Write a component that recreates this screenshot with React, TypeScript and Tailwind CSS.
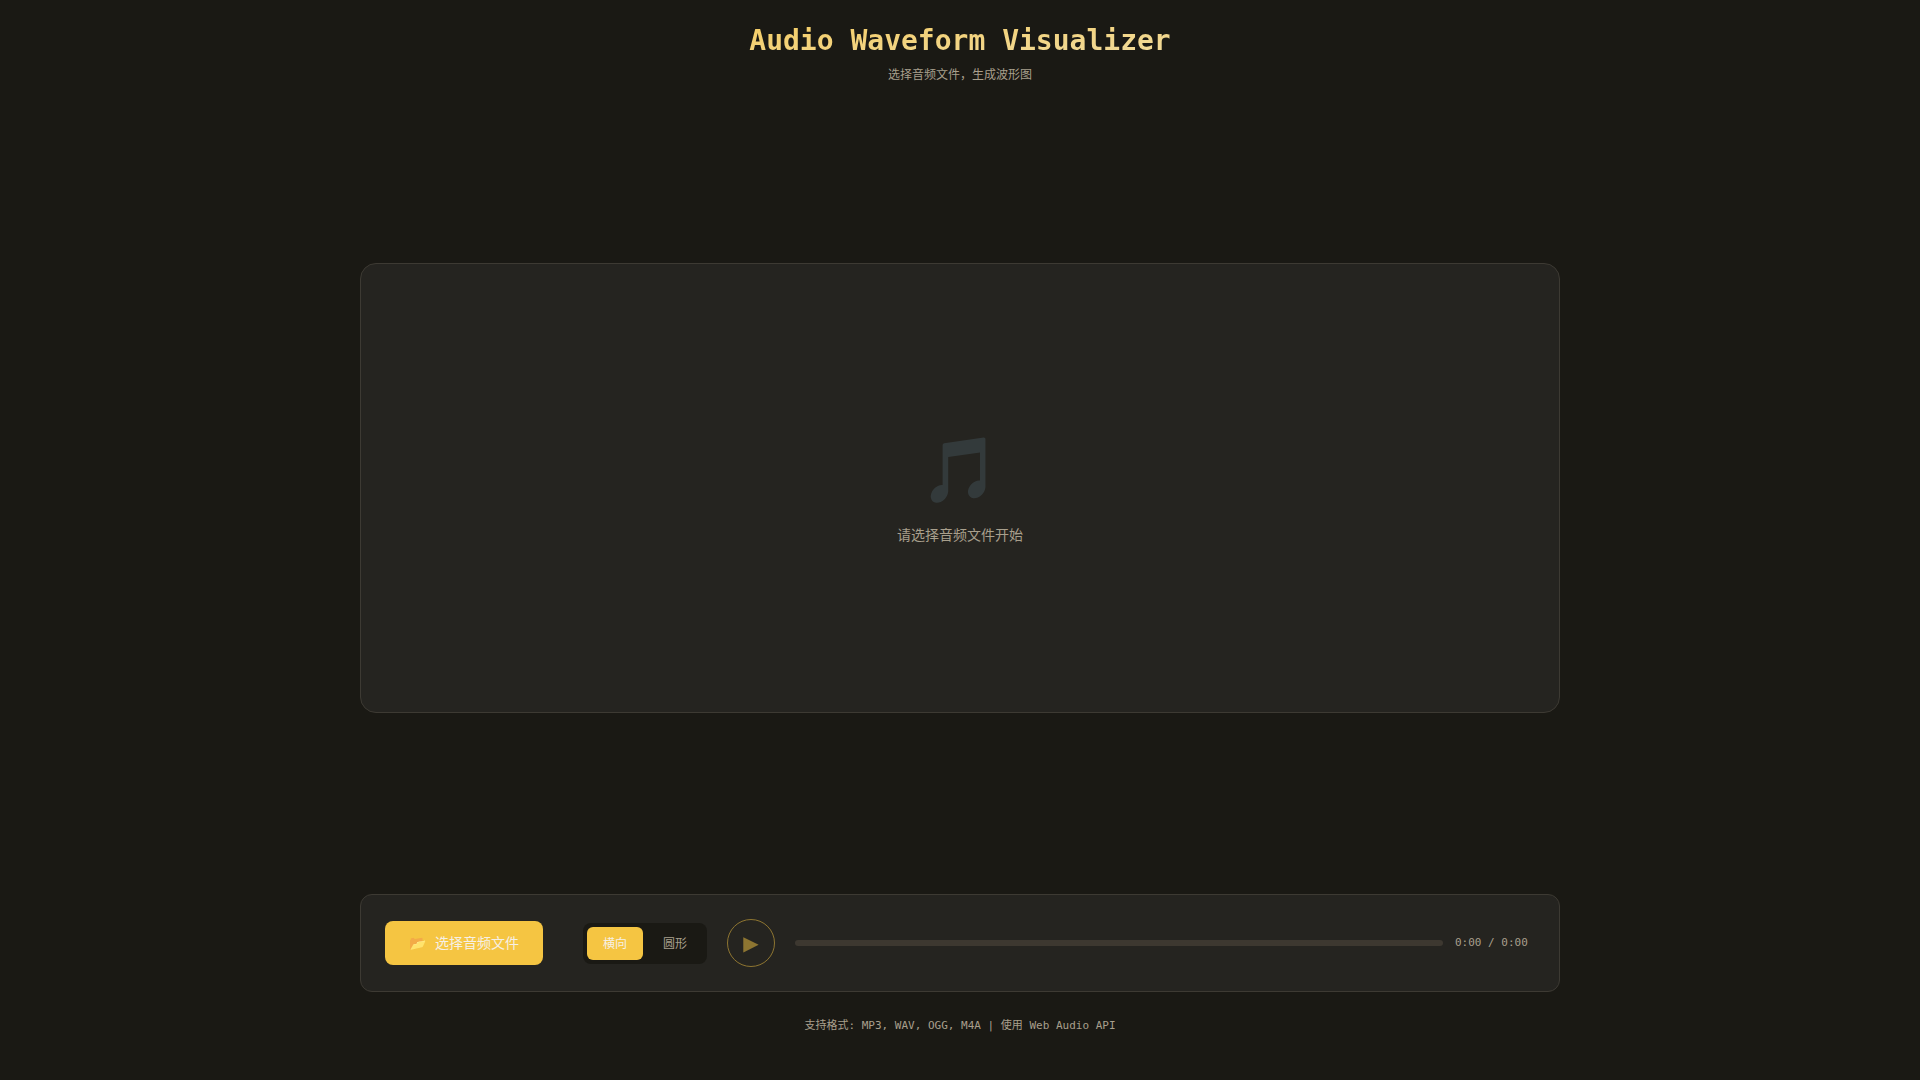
import React, { useState } from "react"

const modes = [
  { id: "linear", label: "横向" },
  { id: "circular", label: "圆形" },
]

export default function App() {
  const [mode, setMode] = useState("linear")

  return (
    <div className="flex min-h-screen flex-col items-center bg-[#1a1914] p-5 font-['DejaVu_Sans_Mono','Noto_Sans_CJK_SC',monospace] text-[#f5f0e6]">
      <header className="mb-[18px] text-center">
        <h1 className="bg-linear-to-br from-[#f5cc60] to-[#f0dca0] bg-clip-text text-[28px] leading-[42px] font-bold text-transparent">
          Audio Waveform Visualizer
        </h1>
        <p className="mt-1 text-xs leading-[18px] text-[#a89f8c]">选择音频文件，生成波形图</p>
      </header>

      <main className="flex w-full max-w-[1200px] flex-1 flex-col gap-5">
        <div className="flex flex-1 items-center">
          <section className="flex h-[450px] w-full flex-col items-center justify-center rounded-2xl border border-[#3d3a33] bg-[#252420]">
            <span className="text-[64px] leading-[78px] opacity-30">🎵</span>
            <p className="mt-4 text-sm leading-5 text-[#a89f8c]">请选择音频文件开始</p>
          </section>
        </div>

        <section className="flex items-center gap-5 rounded-xl border border-[#3d3a33] bg-[#252420] p-6">
          <button className="mr-5 flex items-center gap-[9px] rounded-lg bg-[#f5c542] px-6 py-3 text-sm leading-5">
            <span>📂</span>
            <span>选择音频文件</span>
          </button>
          <div className="flex gap-1 rounded-lg bg-[#1a1914] p-1">
            {modes.map((m) => (
              <button
                key={m.id}
                onClick={() => setMode(m.id)}
                className={`rounded-md px-4 pt-2 pb-1.5 text-xs leading-[19px] ${mode === m.id ? "bg-[#f5c542] text-[#f5f0e6]" : "text-[#a89f8c]"}`}
              >
                {m.label}
              </button>
            ))}
          </div>
          <button
            disabled
            aria-label="播放"
            className="flex size-12 items-center justify-center rounded-full border border-[#f5c542] font-['DejaVu_Sans',sans-serif] text-xl leading-8 text-[#f5c542] opacity-50"
          >
            ▶
          </button>
          <div className="flex flex-1 items-center gap-3">
            <div className="h-1.5 flex-1 rounded-full bg-[#3d3830]" />
            <span className="min-w-20 text-[11px] leading-5 text-[#a89f8c]">0:00 / 0:00</span>
          </div>
        </section>
      </main>

      <footer className="my-6 text-[11px] leading-5 text-[#a89f8c]">
        支持格式: MP3, WAV, OGG, M4A | 使用 Web Audio API
      </footer>
    </div>
  )
}
